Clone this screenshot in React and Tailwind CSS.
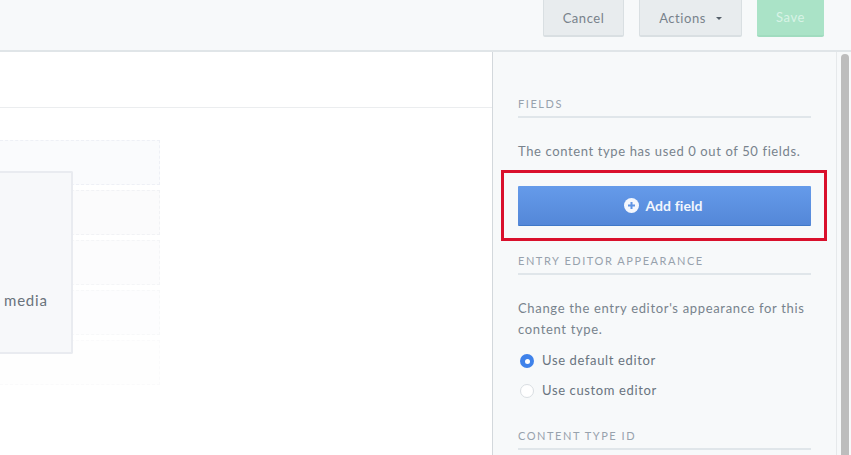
import React from 'react';

const ghostRows = [
  'border-[#eef0f6] bg-[#fafbfd]',
  'border-[#f1f2f5] bg-[#fbfbfc]',
  'border-[#f4f5f7] bg-[#fcfcfd]',
  'border-[#f7f8f9] bg-[#fdfdfe]',
  'border-[#fafafb] bg-[#fefefe]',
];

const SectionTitle = ({ children }) => (
  <div className="border-b-2 border-[#e0e6ea] pb-[5px] text-[11px] leading-[14px] tracking-[1.55px] text-[#97a2ad]">
    {children}
  </div>
);

const Radio = ({ checked, label }) => (
  <label className="flex h-[30px] items-center gap-[8px] pl-[2px] text-[13px] tracking-[0.63px] text-[#69747f]">
    {checked ? (
      <span className="flex h-[14px] w-[14px] items-center justify-center rounded-full bg-[#3f82ea]">
        <span className="h-[5px] w-[5px] rounded-full bg-white" />
      </span>
    ) : (
      <span className="h-[14px] w-[14px] rounded-full border border-[#d9dee2] bg-white" />
    )}
    {label}
  </label>
);

const App = () => {
  return (
    <div className="flex h-[455px] w-[851px] flex-col overflow-hidden bg-white font-['Lato',sans-serif]">
      {/* top bar, buttons are cut off by the top of the window */}
      <header className="flex h-[52px] shrink-0 items-end justify-end gap-[15px] overflow-hidden border-b-2 border-[#e0e5e8] bg-[#f7f9fa] pr-[27px] pb-[13px]">
        <button className="h-[44px] w-[81px] rounded-[2px] border border-[#d9dfe2] border-b-2 bg-[#e8ecee] pt-[8px] text-[13px] tracking-[0.55px] text-[#78828b]">
          Cancel
        </button>
        <button className="flex h-[44px] w-[103px] items-center justify-center gap-[10px] rounded-[2px] border border-[#d9dfe2] border-b-2 bg-[#e8ecee] pt-[8px] text-[13px] tracking-[0.55px] text-[#78828b]">
          Actions
          <span className="h-0 w-0 border-x-[3px] border-t-[3px] border-x-transparent border-t-[#56606a]" />
        </button>
        <button className="h-[44px] w-[67px] rounded-[2px] border-b-2 border-[#a0dcbf] bg-[#aae3c7] pt-[8px] text-[13px] tracking-[0.55px] text-[#d8f3e6]">
          Save
        </button>
      </header>

      <div className="flex min-h-0 flex-1">
        <main className="w-[492px] shrink-0 bg-white">
          <div className="h-[56px] border-b border-[#ebedef]" />
          <div className="relative mt-[32px] flex w-[160px] flex-col gap-[5px]">
            {ghostRows.map((row) => (
              <div key={row} className={`h-[45px] border border-l-0 border-dashed ${row}`} />
            ))}
            <div className="absolute top-[31px] left-0 flex h-[183px] w-[73px] items-end rounded-r-[2px] border-2 border-l-0 border-[#e9ebf0] bg-[#f7f8fa] pb-[43px] pl-[4px] text-[15px] leading-[18px] tracking-[0.8px] text-[#6a737c]">
              media
            </div>
          </div>
        </main>

        <aside className="flex min-w-0 flex-1 border-l border-[#d3d8dc] bg-[#f7f9fa]">
          <div className="w-[344px] shrink-0 border-r border-[#e6e9eb] pt-[45px] pr-[25px] pl-[25px]">
            <SectionTitle>FIELDS</SectionTitle>
            <p className="mt-[23px] text-[13px] leading-[20px] tracking-[0.62px] whitespace-nowrap text-[#78838d]">
              The content type has used 0 out of 50 fields.
            </p>
            <div className="relative mt-[25px]">
              <button className="flex h-[40px] w-full items-center justify-center gap-[6px] rounded-[1px] border-b border-[#3f78c8] bg-gradient-to-b from-[#659bea] to-[#5487d8] pr-[2px] text-[14px] font-bold tracking-[0.1px] text-[#f2f6fd]">
                <svg width="15" height="15" viewBox="0 0 15 15">
                  <circle cx="7.5" cy="7.5" r="7.5" fill="#f4f7fd" />
                  <path d="M7.5 4v7M4 7.5h7" stroke="#5f94e4" strokeWidth="2" />
                </svg>
                Add field
              </button>
              <div className="absolute -top-[16px] -right-[16px] -bottom-[15px] -left-[17px] border-[3px] border-[#d9102c]" />
            </div>
            <div className="mt-[28px]">
              <SectionTitle>ENTRY EDITOR APPEARANCE</SectionTitle>
            </div>
            <p className="mt-[23px] text-[13px] leading-[21px] tracking-[0.67px] text-[#78838d]">
              Change the entry editor's appearance for this content type.
            </p>
            <div className="mt-[6px]">
              <Radio checked label="Use default editor" />
              <Radio label="Use custom editor" />
            </div>
            <div className="mt-[23px]">
              <SectionTitle>CONTENT TYPE ID</SectionTitle>
            </div>
          </div>
          <div className="flex-1 pt-[2px] pl-[4px]">
            <div className="h-[420px] w-[8px] rounded-full bg-[#bdbdbd]" />
          </div>
        </aside>
      </div>
    </div>
  );
};

export default App;
